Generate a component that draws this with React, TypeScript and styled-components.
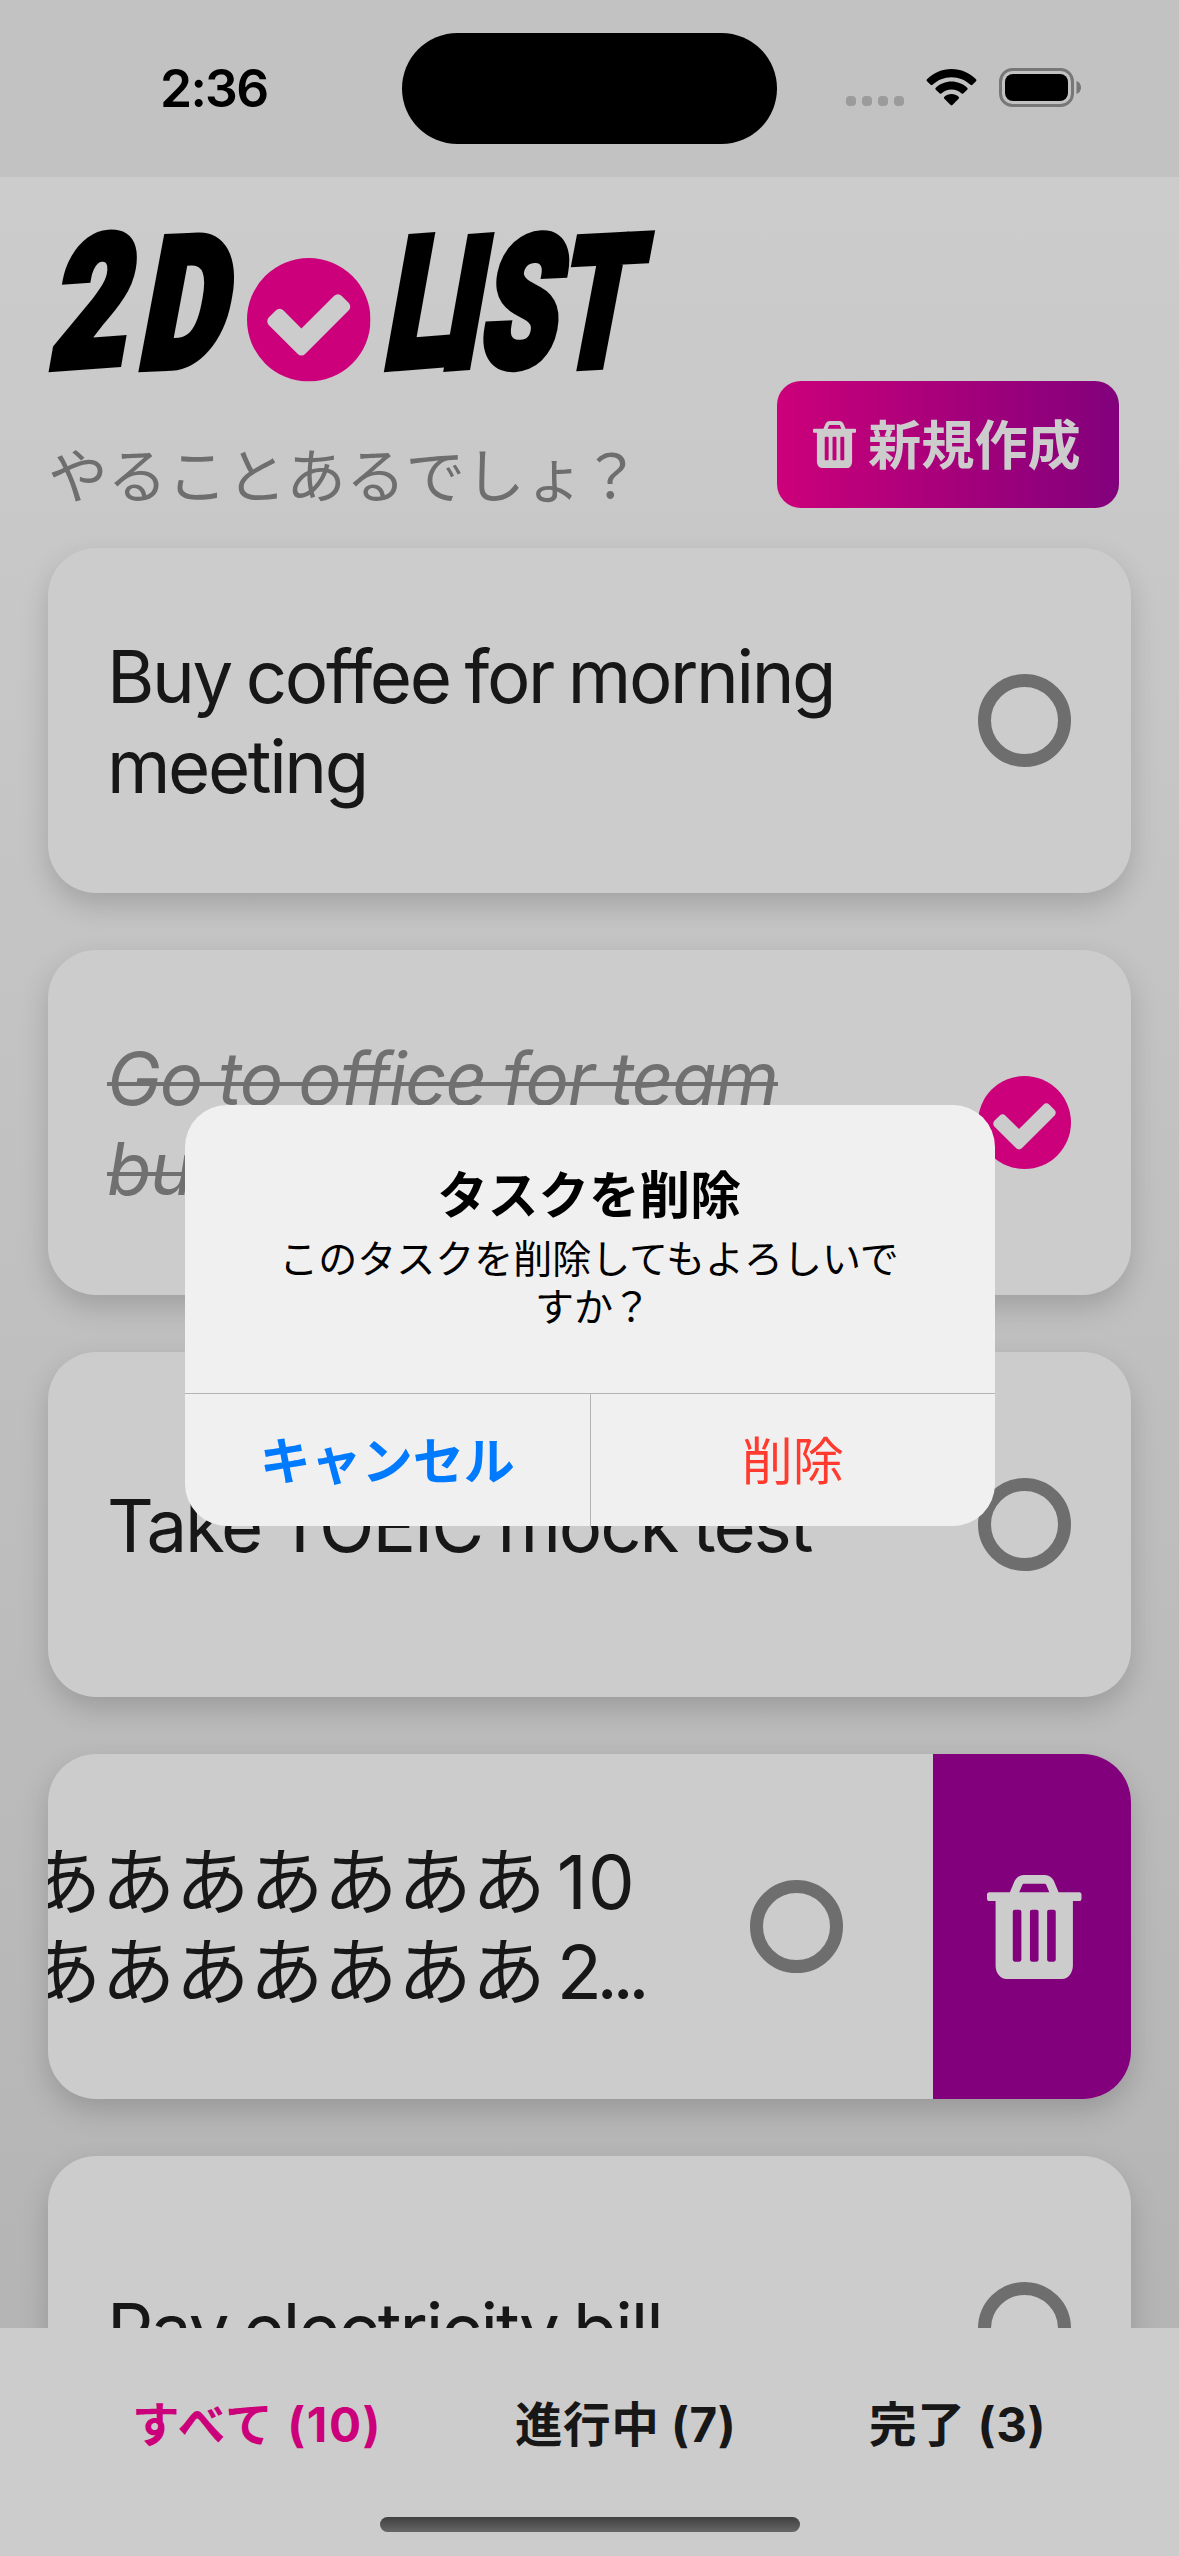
import React from "react";
import styled, { createGlobalStyle, css } from "styled-components";

const color = {
  surface: "#cccccc",
  status: "#c2c2c2",
  ink: "#171717",
  muted: "#6e6e6e",
  pink: "#cc007a",
  purple: "#82007c",
  alert: "#f0f0f0",
  hairline: "#b4b4b4",
};

const latin = `"Inter", "Noto Sans CJK JP", sans-serif`;
const japanese = `"Noto Sans CJK JP", "Inter", sans-serif`;

const GlobalStyle = createGlobalStyle`
  * { box-sizing: border-box; }
  html, body { margin: 0; padding: 0; background: ${color.surface}; }
  button { border: 0; margin: 0; padding: 0; background: none; font: inherit; color: inherit; }
  svg { display: block; flex: none; }
`;

const Screen = styled.div`
  position: relative;
  width: 1179px;
  height: 2556px;
  overflow: hidden;
  display: flex;
  flex-direction: column;
  background: linear-gradient(180deg, #cccccc 177px, #b2b2b2 2556px);
  font-family: ${latin};
  color: ${color.ink};
`;

/* ---------- status bar ---------- */

const StatusBar = styled.header`
  flex: none;
  height: 177px;
  display: grid;
  grid-template-columns: 402px 375px 1fr;
  background: ${color.status};
`;

const Clock = styled.time`
  padding: 58px 0 0 160px;
  font-size: 51.5px;
  line-height: 60px;
  font-weight: 600;
  letter-spacing: -1.7px;
  color: #000;
`;

const Island = styled.div`
  margin-top: 33px;
  height: 111px;
  border-radius: 56px;
  background: #000;
`;

const StatusIcons = styled.div`
  display: flex;
  align-items: flex-start;
  padding: 67px 0 0 69px;
`;

const SignalDots = styled.div`
  display: flex;
  gap: 6px;
  margin: 29px 22px 0 0;
`;

const Dot = styled.i`
  width: 10px;
  height: 10px;
  border-radius: 4px;
  background: #9b9b9b;
`;

/* ---------- page header ---------- */

const PageHeader = styled.section`
  flex: none;
  height: 359px;
  display: flex;
  justify-content: space-between;
  padding: 43px 60px 0 48px;
`;

const Brand = styled.div`
  display: flex;
  flex-direction: column;
`;

const Tagline = styled.p`
  margin: 46px 0 0;
  font-family: ${japanese};
  font-size: 59.6px;
  line-height: 72px;
  color: ${color.muted};
  white-space: nowrap;
`;

const QuestionMark = styled.span<{ $pull: number }>`
  margin-left: -${(p) => p.$pull}px;
  margin-right: -8px;
`;

const CreateButton = styled.button`
  width: 342px;
  height: 127px;
  margin-top: 161px;
  display: flex;
  align-items: center;
  gap: 12px;
  padding-left: 36px;
  border-radius: 24px;
  background: linear-gradient(90deg, ${color.pink}, ${color.purple});
  color: ${color.surface};
`;

const CreateLabel = styled.span`
  padding-bottom: 6px;
  font-family: ${japanese};
  font-size: 53.2px;
  line-height: 70px;
  font-weight: 700;
  white-space: nowrap;
`;

/* ---------- task list ---------- */

const TaskList = styled.main`
  flex: 1;
  min-height: 0;
  overflow: hidden;
  display: flex;
  flex-direction: column;
  gap: 57px;
  padding: 12px 48px 0;
`;

const Card = styled.article`
  flex: none;
  height: 345px;
  display: flex;
  overflow: hidden;
  border-radius: 48px;
  background: ${color.surface};
  box-shadow: 0 12px 28px rgba(0, 0, 0, 0.17);
`;

const CardBody = styled.div<{ $swiped?: boolean }>`
  flex: none;
  width: 1083px;
  display: flex;
  align-items: center;
  justify-content: space-between;
  padding: 0 60px 0 59px;
  margin-left: ${(p) => (p.$swiped ? "-228px" : "0")};
`;

const TaskText = styled.p<{ $cjk?: boolean; $tracking?: number }>`
  margin: 0;
  padding-top: 2px;
  font-size: 72.5px;
  line-height: 89.5px;
  letter-spacing: ${(p) => p.$tracking ?? -2.1}px;
  word-spacing: -3px;
  white-space: nowrap;
  ${(p) =>
    p.$cjk &&
    css`
      font-size: 74.1px;
      letter-spacing: 0;
    `}
`;

const DoneText = styled.s`
  color: #707070;
  font-style: italic;
  text-decoration: none;
  background: linear-gradient(#707070, #707070) 0 47px / 100% 4px no-repeat;
`;

const Digits = styled.span<{ $tracking: number }>`
  margin-left: 11px;
  letter-spacing: ${(p) => p.$tracking}px;
`;

const Ring = styled.span`
  flex: none;
  width: 93px;
  height: 93px;
  border: 13.5px solid ${color.muted};
  border-radius: 50%;
`;

const DeletePanel = styled.button`
  flex: none;
  width: 228px;
  padding-left: 24px;
  display: flex;
  align-items: center;
  background: linear-gradient(90deg, ${color.surface} 30px, ${color.purple} 30px);
  color: ${color.surface};
  svg { margin-left: 60px; }
`;

/* ---------- bottom tabs ---------- */

const TabBar = styled.nav`
  flex: none;
  height: 228px;
  display: flex;
  flex-direction: column;
  align-items: center;
  background: ${color.surface};
`;

const Tabs = styled.div`
  width: 100%;
  height: 189px;
  display: flex;
  padding-left: 132px;
`;

const Tab = styled.button<{ $active?: boolean; $width: number; $tracking: number }>`
  width: ${(p) => p.$width}px;
  height: 60px;
  margin-top: 67px;
  text-align: left;
  font-size: 47.6px;
  line-height: 60px;
  font-weight: 700;
  letter-spacing: ${(p) => p.$tracking}px;
  white-space: nowrap;
  color: ${(p) => (p.$active ? color.pink : color.ink)};
`;

const HomeIndicator = styled.div`
  width: 420px;
  height: 15px;
  border-radius: 8px;
  background: linear-gradient(#404040, #666666);
`;

/* ---------- alert ---------- */

const Alert = styled.div`
  position: absolute;
  top: 1105px;
  left: 185px;
  width: 810px;
  height: 421px;
  display: flex;
  flex-direction: column;
  overflow: hidden;
  border-radius: 42px;
  background: ${color.alert};
  font-family: ${japanese};
  color: #000;
`;

const AlertContent = styled.div`
  height: 288px;
  padding: 57px 81px 0 79px;
  text-align: center;
`;

const AlertTitle = styled.h2`
  margin: 0;
  font-size: 50.6px;
  line-height: 60px;
  font-weight: 700;
`;

const AlertMessage = styled.p`
  margin: 10px 0 0;
  font-size: 39px;
  line-height: 48px;
`;

const AlertActions = styled.div`
  flex: 1;
  display: flex;
  border-top: 1px solid ${color.hairline};
`;

const AlertButton = styled.button<{ $destructive?: boolean }>`
  flex: 1;
  padding-bottom: 5px;
  font-size: 51px;
  font-weight: ${(p) => (p.$destructive ? 400 : 700)};
  color: ${(p) => (p.$destructive ? "#ff3b30" : "#007aff")};
  & + & { border-left: 1px solid ${color.hairline}; }
`;

/* ---------- drawings ---------- */

const TICK =
  "M1284 606q0-28-18-46l-91-90q-19-19-45-19t-45 19l-408 407-226-226q-19-19-45-19t-45 19l-91 90q-18 18-18 46 0 27 18 45l362 362q19 19 45 19 27 0 46-19l543-543q18-18 18-45z";

const TickShapes = () => (
  <>
    <circle cx="768" cy="768" r="768" fill={color.pink} />
    <path d={TICK} fill={color.surface} />
  </>
);

const CheckCircle = () => (
  <svg width="93" height="93" viewBox="0 0 1536 1536">
    <TickShapes />
  </svg>
);

const Trash = ({ width, height }: { width: number; height: number }) => (
  <svg width={width} height={height} viewBox="0 128 1408 1536" preserveAspectRatio="none" fill="currentColor">
    <path d="M512 1376v-704q0-14-9-23t-23-9h-64q-14 0-23 9t-9 23v704q0 14 9 23t23 9h64q14 0 23-9t9-23zm256 0v-704q0-14-9-23t-23-9h-64q-14 0-23 9t-9 23v704q0 14 9 23t23 9h64q14 0 23-9t9-23zm256 0v-704q0-14-9-23t-23-9h-64q-14 0-23 9t-9 23v704q0 14 9 23t23 9h64q14 0 23-9t9-23zm-544-992h448l-48-117q-7-9-17-11h-317q-10 2-17 11zm928 32v64q0 14-9 23t-23 9h-96v948q0 83-47 143.500t-113 60.500h-832q-66 0-113-58.500t-47-141.500v-952h-96q-14 0-23-9t-9-23v-64q0-14 9-23t23-9h309l70-167q15-37 54-63t79-26h320q40 0 79 26t54 63l70 167h309q14 0 23 9t9 23z" />
  </svg>
);

const LogoArt = styled.svg`
  overflow: visible;
`;

const LogoLetters = styled.text`
  font-family: "Roboto", "Liberation Sans", sans-serif;
  font-weight: 900;
  font-size: 182px;
  fill: #000;
  stroke: #000;
  stroke-width: 9px;
  stroke-linejoin: miter;
`;

const Logo = () => (
  <LogoArt width="620" height="170" viewBox="0 0 620 170">
    <LogoLetters transform="translate(-7 148) skewX(-12) scale(0.72 1)" x="8 131" rotate="-3 -2">
      2D
    </LogoLetters>
    <svg x="199" y="38" width="123.5" height="123.500" viewBox="0 0 1536 1536">
      <TickShapes />
    </svg>
    <LogoLetters transform="translate(333 148) skewX(-12) scale(0.66 1)" x="0 88 144 260" rotate="-3 -3 -2 -2">
      LIST
    </LogoLetters>
  </LogoArt>
);

const Wifi = () => (
  <svg width="51" height="39" viewBox="0 0 51 39" fill="#000">
    <path d="M25.500 2C35 2 43.600 5.800 50 12.200c.6.600.6 1.400 0 2l-3.600 3.600c-.5.500-1.300.5-1.900 0C39.500 13 32.800 10.200 25.500 10.200S11.500 13 6.500 17.800c-.6.500-1.400.5-1.900 0L1 14.200c-.6-.6-.6-1.400 0-2C7.400 5.800 16 2 25.500 2z" />
    <path d="M25.500 14.500c6 0 11.500 2.300 15.700 6.200.6.600.6 1.400 0 2l-3.700 3.600c-.5.500-1.300.5-1.900.1a14.900 14.900 0 0 0-20.200 0c-.6.400-1.400.4-1.900-.1l-3.700-3.600c-.6-.6-.6-1.400 0-2 4.200-3.900 9.700-6.200 15.700-6.200z" />
    <path d="M25.500 27c2.700 0 5.200 1 7.100 2.700.6.600.6 1.400 0 2l-6.200 6.400c-.5.500-1.300.5-1.800 0l-6.200-6.400c-.6-.6-.6-1.400 0-2 1.900-1.700 4.400-2.700 7.100-2.700z" />
  </svg>
);

const Battery = () => (
  <svg width="83" height="40" viewBox="0 0 83 40">
    <rect x="1.500" y="2.500" width="72" height="36" rx="12" fill="none" stroke="#777" strokeWidth="3" />
    <rect x="6" y="7" width="63" height="27" rx="8" fill="#000" />
    <path d="M77.500 14v13c3-1.200 4.500-3.600 4.500-6.500s-1.500-5.300-4.500-6.500z" fill="#777" />
  </svg>
);

const BatterySlot = styled.span`
  margin-left: 22px;
`;

export default function App() {
  return (
    <>
      <GlobalStyle />
      <Screen>
        <StatusBar>
          <Clock>2:36</Clock>
          <Island />
          <StatusIcons>
            <SignalDots>
              <Dot />
              <Dot />
              <Dot />
              <Dot />
            </SignalDots>
            <Wifi />
            <BatterySlot>
              <Battery />
            </BatterySlot>
          </StatusIcons>
        </StatusBar>

        <PageHeader>
          <Brand>
            <Logo />
            <Tagline>
              やることあるでしょ<QuestionMark $pull={3}>？</QuestionMark>
            </Tagline>
          </Brand>
          <CreateButton>
            <Trash width={43} height={47} />
            <CreateLabel>新規作成</CreateLabel>
          </CreateButton>
        </PageHeader>

        <TaskList>
          <Card>
            <CardBody>
              <TaskText $tracking={-2.4}>
                Buy coffee for morning
                <br />
                meeting
              </TaskText>
              <Ring />
            </CardBody>
          </Card>
          <Card>
            <CardBody>
              <TaskText $tracking={-1.3}>
                <DoneText>
                  Go to office for team
                  <br />
                  building
                </DoneText>
              </TaskText>
              <CheckCircle />
            </CardBody>
          </Card>
          <Card>
            <CardBody>
              <TaskText>Take TOEIC mock test</TaskText>
              <Ring />
            </CardBody>
          </Card>
          <Card>
            <CardBody $swiped>
              <TaskText $cjk>
                あああああああああ<Digits $tracking={1}>10</Digits>
                <br />
                あああああああああ<Digits $tracking={-5.5}>2...</Digits>
              </TaskText>
              <Ring />
            </CardBody>
            <DeletePanel aria-label="削除">
              <Trash width={94.5} height={104} />
            </DeletePanel>
          </Card>
          <Card>
            <CardBody>
              <TaskText>Pay electricity bill</TaskText>
              <Ring />
            </CardBody>
          </Card>
        </TaskList>

        <TabBar>
          <Tabs>
            <Tab $active $width={383} $tracking={1.6}>
              すべて (10)
            </Tab>
            <Tab $width={354} $tracking={0.5}>
              進行中 (7)
            </Tab>
            <Tab $width={210} $tracking={0.7}>
              完了 (3)
            </Tab>
          </Tabs>
          <HomeIndicator />
        </TabBar>

        <Alert role="alertdialog">
          <AlertContent>
            <AlertTitle>タスクを削除</AlertTitle>
            <AlertMessage>
              このタスクを削除してもよろしいで
              <br />
              すか<QuestionMark $pull={1}>？</QuestionMark>
            </AlertMessage>
          </AlertContent>
          <AlertActions>
            <AlertButton>キャンセル</AlertButton>
            <AlertButton $destructive>削除</AlertButton>
          </AlertActions>
        </Alert>
      </Screen>
    </>
  );
}
